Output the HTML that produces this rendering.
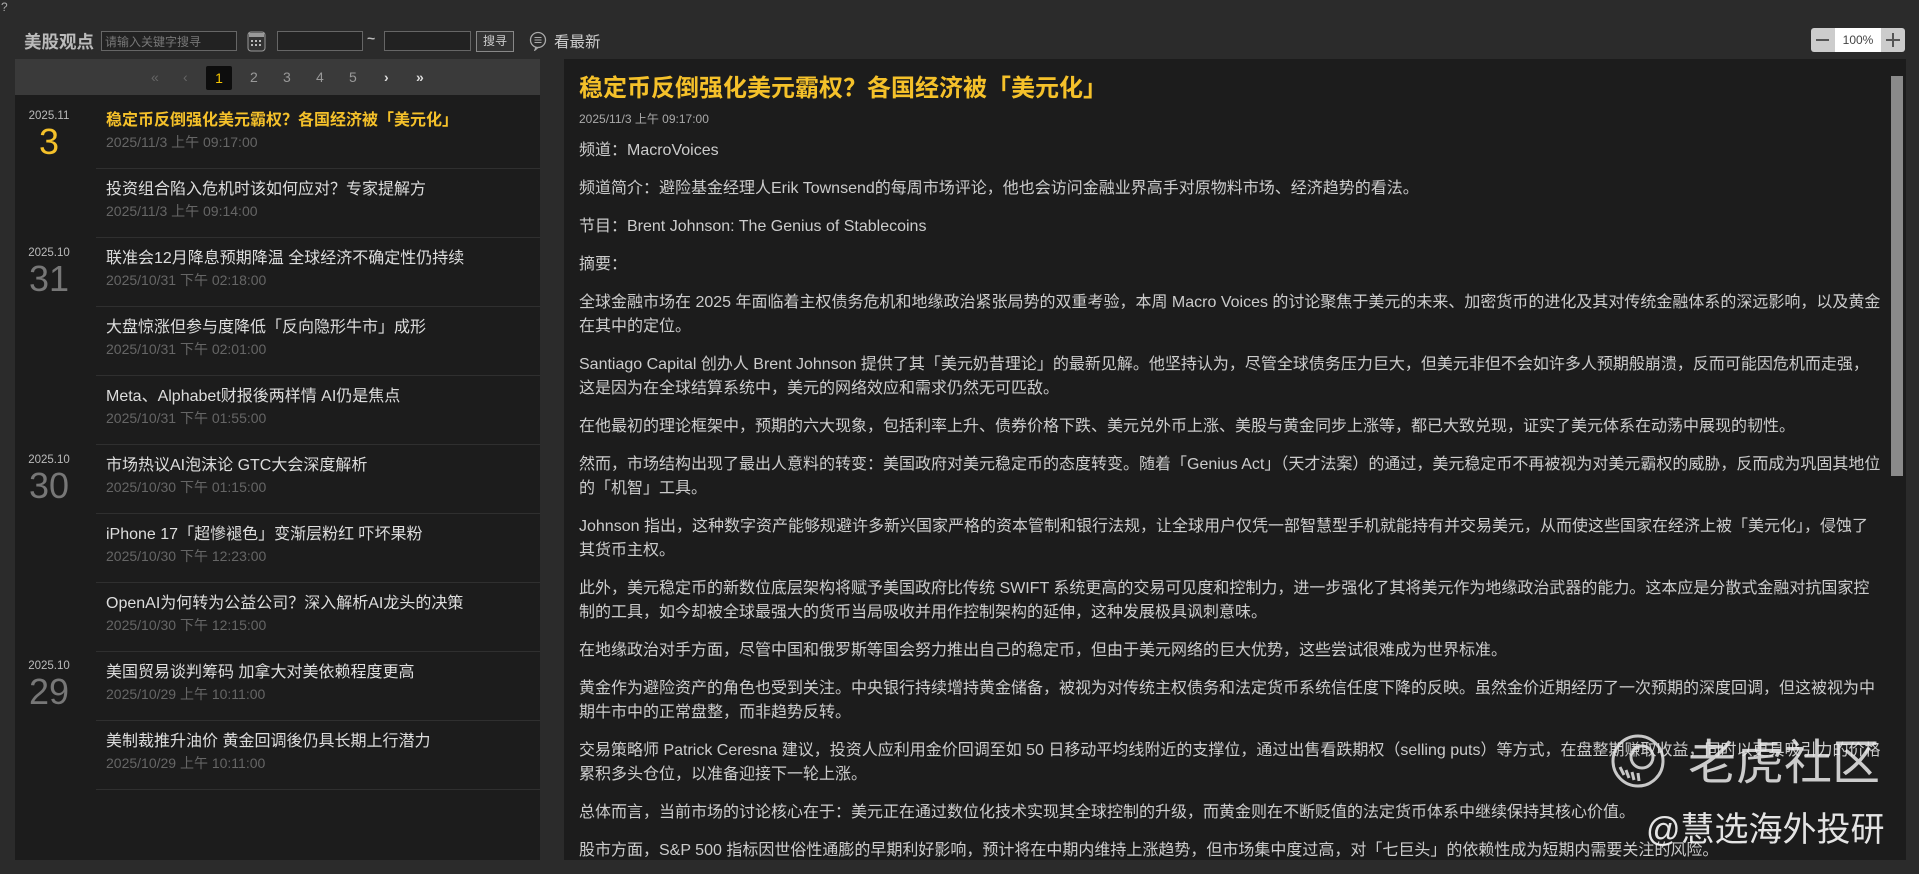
<!DOCTYPE html>
<html><head><meta charset="utf-8">
<style>
*{margin:0;padding:0;box-sizing:border-box}
html,body{width:1919px;height:874px;overflow:hidden;background:#2b2b2b;font-family:"Liberation Sans","Noto Sans CJK SC",sans-serif;color:#ccc}
.q{position:absolute;left:1px;top:0;font-size:12px;color:#aaa}
.hdr{position:absolute;top:29px;left:0;height:24px;width:1919px}
.hdr>*{position:absolute}
.brand{left:24px;top:0px;font-size:17.5px;font-weight:bold;color:#bbb}
.inp{border:1px solid #666;background:#222;height:20px;top:2px}
.ph{font-size:12px;color:#777;padding:2px 3px;line-height:16px}
.btn{left:476px;top:2px;width:38px;height:21px;border:1px solid #888;background:#333;color:#ccc;font-size:12px;text-align:center;line-height:19px}
.newest{left:554px;top:1px;font-size:15.5px;color:#ccc}
.zoom{left:1811px;top:28px;width:94px;height:24px;background:#ccc;border-radius:3px}
.zoom .v{position:absolute;left:24px;top:0;width:46px;height:24px;background:#fff;color:#444;font-size:12px;text-align:center;line-height:24px}
.lp{position:absolute;left:15px;top:59px;width:525px;height:801px;background:#1c1c1c}
.pager{height:36px;background:#3a3a3a;position:relative;font-size:14px;color:#999}
.pager span{position:absolute;top:10px}
.pager .cur{left:191px;top:7px;width:26px;height:24px;background:#0d0d0d;color:#f5c400;text-align:center;line-height:24px;border-radius:2px}
.item{position:absolute;left:81px;width:444px;height:69px;border-bottom:1px solid #2f2f2f}
.item .t{position:absolute;left:10px;top:6px;font-size:16px;color:#ddd;white-space:nowrap}
.item .d{position:absolute;left:10px;top:32px;font-size:14px;color:#666}
.grp{position:absolute;left:9px;width:50px;text-align:center}
.grp .ym{font-size:11.5px;color:#bbb}
.grp .dd{font-size:36px;color:#777;line-height:38px;margin-top:1px}
.rp{position:absolute;left:564px;top:59px;width:1342px;height:801px;background:#1c1c1c;overflow:hidden}
.sb{position:absolute;right:3px;top:17px;width:12px;height:400px;background:#8a8a8a}
.art{position:absolute;left:15px;top:14px;width:1306px}
.art h1{font-size:24px;color:#f5c12a;font-weight:bold;line-height:32px}
.art .dt{font-size:12px;color:#aaa;margin:5px 0 12px}
.art p{font-size:16px;line-height:24px;margin-bottom:14px;color:#ccc}
.wm1{position:absolute;left:1688px;top:723px;font-size:48px;color:rgba(235,235,235,.85);font-family:"Noto Sans CJK SC",sans-serif}
.wm2{position:absolute;left:1646px;top:802px;font-size:34px;color:rgba(245,245,245,.92);font-family:"Liberation Sans","Noto Sans CJK SC",sans-serif}
</style></head><body>
<div class="q">?</div>
<div class="hdr">
<div class="brand">美股观点</div>
<div class="inp ph" style="left:101px;width:136px">请输入关键字搜寻</div>
<svg style="left:247px;top:2px" width="19" height="21" viewBox="0 0 19 21"><rect x="1" y="1" width="17" height="19" rx="3" fill="#333" stroke="#999"/><rect x="2" y="2" width="15" height="4" fill="#999"/><g fill="#bbb"><rect x="4" y="9" width="2" height="2"/><rect x="8" y="9" width="2" height="2"/><rect x="12" y="9" width="2" height="2"/><rect x="4" y="13" width="2" height="2"/><rect x="8" y="13" width="2" height="2"/><rect x="12" y="13" width="2" height="2"/></g></svg>
<div class="inp" style="left:277px;width:86px"></div>
<div style="left:367px;top:1px;font-size:14px;color:#bbb;font-weight:bold">~</div>
<div class="inp" style="left:384px;width:87px"></div>
<div class="btn">搜寻</div>
<svg style="left:529px;top:2px" width="18" height="20" viewBox="0 0 18 20"><path d="M9 1.5a7.5 7.5 0 1 0 0 15h0l-3 2.5 1-3" fill="none" stroke="#aaa" stroke-width="1.3"/><path d="M9 1.5a7.5 7.5 0 0 1 0 15" fill="none" stroke="#aaa" stroke-width="1.3"/><path d="M5.5 6.5h7M5.5 9h7M5.5 11.5h7" stroke="#aaa"/></svg>
<div class="newest">看最新</div>
</div>
<div class="zoom" style="position:absolute"><svg style="position:absolute;left:4px;top:5px" width="15" height="14"><path d="M1 7h13" stroke="#555" stroke-width="2"/></svg><div class="v">100%</div><svg style="position:absolute;left:74px;top:4px" width="16" height="16"><path d="M1 8h14M8 1v14" stroke="#555" stroke-width="2"/></svg></div>

<div class="lp">
<div class="pager">
<span style="left:136px;color:#666">«</span><span style="left:168px;color:#666">‹</span>
<span class="cur">1</span>
<span style="left:235px">2</span><span style="left:268px">3</span><span style="left:301px">4</span><span style="left:334px">5</span>
<span style="left:369px;color:#ddd;font-weight:bold">›</span><span style="left:401px;color:#ddd;font-weight:bold">»</span>
</div>
<div class="grp" style="top:51px"><div class="ym">2025.11</div><div class="dd" style="color:#f5c12a">3</div></div>
<div class="grp" style="top:188px"><div class="ym">2025.10</div><div class="dd">31</div></div>
<div class="grp" style="top:395px"><div class="ym">2025.10</div><div class="dd">30</div></div>
<div class="grp" style="top:601px"><div class="ym">2025.10</div><div class="dd">29</div></div>
<div class="item" style="top:41px"><div class="t" style="color:#f5c12a;font-weight:bold">稳定币反倒强化美元霸权？各国经济被「美元化」</div><div class="d">2025/11/3 上午 09:17:00</div></div>
<div class="item" style="top:110px"><div class="t">投资组合陷入危机时该如何应对？专家提解方</div><div class="d">2025/11/3 上午 09:14:00</div></div>
<div class="item" style="top:179px"><div class="t">联准会12月降息预期降温 全球经济不确定性仍持续</div><div class="d">2025/10/31 下午 02:18:00</div></div>
<div class="item" style="top:248px"><div class="t">大盘惊涨但参与度降低「反向隐形牛市」成形</div><div class="d">2025/10/31 下午 02:01:00</div></div>
<div class="item" style="top:317px"><div class="t">Meta、Alphabet财报後两样情 AI仍是焦点</div><div class="d">2025/10/31 下午 01:55:00</div></div>
<div class="item" style="top:386px"><div class="t">市场热议AI泡沫论 GTC大会深度解析</div><div class="d">2025/10/30 下午 01:15:00</div></div>
<div class="item" style="top:455px"><div class="t">iPhone 17「超慘褪色」变渐层粉红 吓坏果粉</div><div class="d">2025/10/30 下午 12:23:00</div></div>
<div class="item" style="top:524px"><div class="t">OpenAI为何转为公益公司？深入解析AI龙头的决策</div><div class="d">2025/10/30 下午 12:15:00</div></div>
<div class="item" style="top:593px"><div class="t">美国贸易谈判筹码 加拿大对美依赖程度更高</div><div class="d">2025/10/29 上午 10:11:00</div></div>
<div class="item" style="top:662px"><div class="t">美制裁推升油价 黄金回调後仍具长期上行潜力</div><div class="d">2025/10/29 上午 10:11:00</div></div>
</div>

<div class="rp">
<div class="sb"></div>
<div class="art">
<h1>稳定币反倒强化美元霸权？各国经济被「美元化」</h1>
<div class="dt">2025/11/3 上午 09:17:00</div>
<p>频道：MacroVoices</p>
<p>频道简介：避险基金经理人Erik Townsend的每周市场评论，他也会访问金融业界高手对原物料市场、经济趋势的看法。</p>
<p>节目：Brent Johnson: The Genius of Stablecoins</p>
<p>摘要：</p>
<p>全球金融市场在 2025 年面临着主权债务危机和地缘政治紧张局势的双重考验，本周 Macro Voices 的讨论聚焦于美元的未来、加密货币的进化及其对传统金融体系的深远影响，以及黄金在其中的定位。</p>
<p>Santiago Capital 创办人 Brent Johnson 提供了其「美元奶昔理论」的最新见解。他坚持认为，尽管全球债务压力巨大，但美元非但不会如许多人预期般崩溃，反而可能因危机而走强，<br>这是因为在全球结算系统中，美元的网络效应和需求仍然无可匹敌。</p>
<p>在他最初的理论框架中，预期的六大现象，包括利率上升、债券价格下跌、美元兑外币上涨、美股与黄金同步上涨等，都已大致兑现，证实了美元体系在动荡中展现的韧性。</p>
<p>然而，市场结构出现了最出人意料的转变：美国政府对美元稳定币的态度转变。随着「Genius Act」（天才法案）的通过，美元稳定币不再被视为对美元霸权的威胁，反而成为巩固其地位的「机智」工具。</p>
<p>Johnson 指出，这种数字资产能够规避许多新兴国家严格的资本管制和银行法规，让全球用户仅凭一部智慧型手机就能持有并交易美元，从而使这些国家在经济上被「美元化」，侵蚀了<br>其货币主权。</p>
<p>此外，美元稳定币的新数位底层架构将赋予美国政府比传统 SWIFT 系统更高的交易可见度和控制力，进一步强化了其将美元作为地缘政治武器的能力。这本应是分散式金融对抗国家控制的工具，如今却被全球最强大的货币当局吸收并用作控制架构的延伸，这种发展极具讽刺意味。</p>
<p>在地缘政治对手方面，尽管中国和俄罗斯等国会努力推出自己的稳定币，但由于美元网络的巨大优势，这些尝试很难成为世界标准。</p>
<p>黄金作为避险资产的角色也受到关注。中央银行持续增持黄金储备，被视为对传统主权债务和法定货币系统信任度下降的反映。虽然金价近期经历了一次预期的深度回调，但这被视为中期牛市中的正常盘整，而非趋势反转。</p>
<p>交易策略师 Patrick Ceresna 建议，投资人应利用金价回调至如 50 日移动平均线附近的支撑位，通过出售看跌期权（selling puts）等方式，在盘整期赚取收益，同时以更具吸引力的价格累积多头仓位，以准备迎接下一轮上涨。</p>
<p>总体而言，当前市场的讨论核心在于：美元正在通过数位化技术实现其全球控制的升级，而黄金则在不断贬值的法定货币体系中继续保持其核心价值。</p>
<p>股市方面，S&amp;P 500 指标因世俗性通膨的早期利好影响，预计将在中期内维持上涨趋势，但市场集中度过高，对「七巨头」的依赖性成为短期内需要关注的风险。</p>
</div>
</div>

<svg style="position:absolute;left:1610px;top:733px" width="56" height="56" viewBox="0 0 56 56"><circle cx="28" cy="28" r="25" fill="none" stroke="rgba(230,230,230,.85)" stroke-width="3"/><circle cx="32" cy="24" r="11" fill="none" stroke="rgba(230,230,230,.85)" stroke-width="3"/><path d="M10 34l4 8M16 37l3 8M22 39l2 8M28 40l1 8" stroke="rgba(230,230,230,.85)" stroke-width="3"/></svg>
<div class="wm1">老虎社区</div>
<div class="wm2">@慧选海外投研</div>
</body></html>
